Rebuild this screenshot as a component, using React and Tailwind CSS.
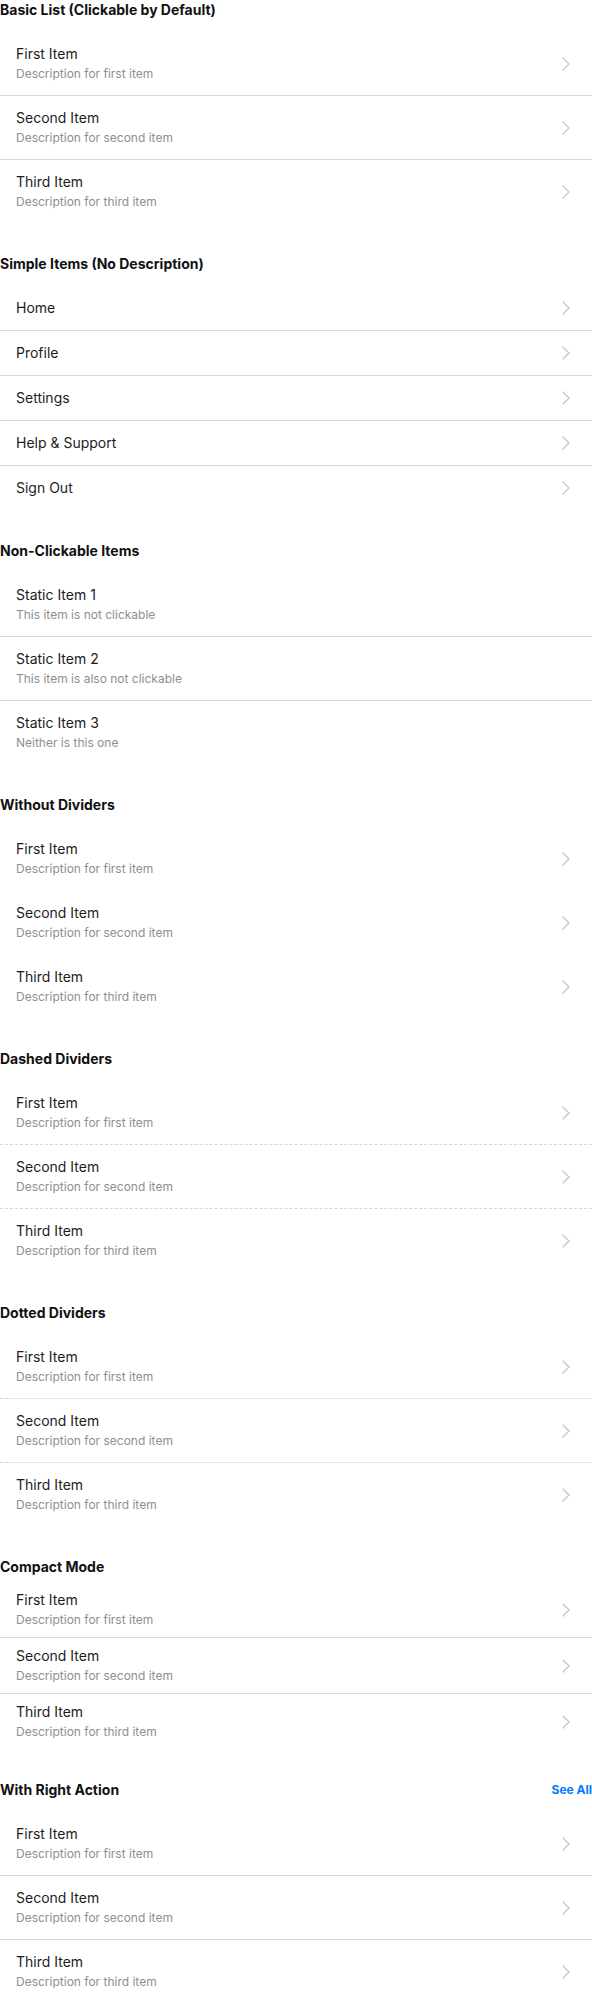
import React from 'react';

const basicItems = [
  { title: 'First Item', desc: 'Description for first item' },
  { title: 'Second Item', desc: 'Description for second item' },
  { title: 'Third Item', desc: 'Description for third item' },
];

const simpleItems = ['Home', 'Profile', 'Settings', 'Help & Support', 'Sign Out'];

const staticItems = [
  { title: 'Static Item 1', desc: 'This item is not clickable' },
  { title: 'Static Item 2', desc: 'This item is also not clickable' },
  { title: 'Static Item 3', desc: 'Neither is this one' },
];

const dividerClass = {
  solid: 'border-b border-[#d6d6db]',
  dashed: 'border-b border-dashed border-[#d6d6db]',
  dotted: 'border-b border-dotted border-[#c8c8cd]',
  none: 'border-b border-transparent',
};

const Chevron = () => (
  <svg width="8" height="14" viewBox="0 0 8 14" fill="none" className="shrink-0 text-[#c7c7cc]">
    <path d="M1 1l6 6-6 6" stroke="currentColor" strokeWidth="1.4" strokeLinecap="round" strokeLinejoin="round" />
  </svg>
);

const ListItem = ({ title, desc, clickable = true, divider = 'solid', last, compact }) => {
  // last row has no divider line
  const border = last ? '' : dividerClass[divider];
  const pad = compact ? 'py-2' : 'py-3';
  return (
    <div className={`flex items-center pl-4 pr-[22px] ${pad} ${border} ${clickable ? 'cursor-pointer' : ''}`}>
      <div className="flex-1 min-w-0">
        <p className="text-[14px] leading-5 text-[#1c1c1e]">{title}</p>
        {desc && <p className="text-[12px] leading-[19px] text-[#8e8e93]">{desc}</p>}
      </div>
      {clickable && <Chevron />}
    </div>
  );
};

const Section = ({ title, action, compact, children }) => (
  <section className="mb-[31px]">
    <div className={`flex items-center justify-between h-5 ${compact ? 'mb-[5px]' : 'mb-3'}`}>
      <h2 className="text-[14px] leading-5 font-bold text-[#111111]">{title}</h2>
      {action}
    </div>
    <div>{children}</div>
  </section>
);

const App = () => {
  return (
    <div className="min-h-screen bg-white font-['Inter',sans-serif]">
      <Section title="Basic List (Clickable by Default)">
        {basicItems.map((it, i) => (
          <ListItem key={i} title={it.title} desc={it.desc} last={i === basicItems.length - 1} />
        ))}
      </Section>

      <Section title="Simple Items (No Description)">
        {simpleItems.map((t, i) => (
          <ListItem key={i} title={t} last={i === simpleItems.length - 1} />
        ))}
      </Section>

      <Section title="Non-Clickable Items">
        {staticItems.map((it, i) => (
          <ListItem key={i} title={it.title} desc={it.desc} clickable={false} last={i === staticItems.length - 1} />
        ))}
      </Section>

      <Section title="Without Dividers">
        {basicItems.map((it, i) => (
          <ListItem key={i} title={it.title} desc={it.desc} divider="none" last={i === basicItems.length - 1} />
        ))}
      </Section>

      <Section title="Dashed Dividers">
        {basicItems.map((it, i) => (
          <ListItem key={i} title={it.title} desc={it.desc} divider="dashed" last={i === basicItems.length - 1} />
        ))}
      </Section>

      <Section title="Dotted Dividers">
        {basicItems.map((it, i) => (
          <ListItem key={i} title={it.title} desc={it.desc} divider="dotted" last={i === basicItems.length - 1} />
        ))}
      </Section>

      <Section title="Compact Mode" compact>
        {basicItems.map((it, i) => (
          <ListItem key={i} title={it.title} desc={it.desc} compact last={i === basicItems.length - 1} />
        ))}
      </Section>

      <Section
        title="With Right Action"
        action={<button className="text-[12px] leading-5 font-bold text-[#007aff]">See All</button>}
      >
        {basicItems.map((it, i) => (
          <ListItem key={i} title={it.title} desc={it.desc} last={i === basicItems.length - 1} />
        ))}
      </Section>
    </div>
  );
};

export default App;
